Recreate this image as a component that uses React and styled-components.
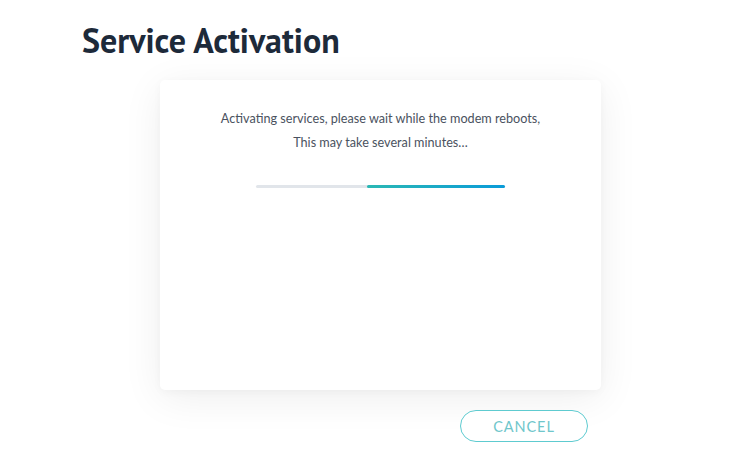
import React from "react";
import styled, { createGlobalStyle } from "styled-components";

const Global = createGlobalStyle`
  html, body { margin: 0; padding: 0; background: #ffffff; }
  body { font-family: "Source Sans Pro", Lato, "Noto Sans", sans-serif; }
`;

const Page = styled.main`
  width: 738px;
  height: 464px;
  box-sizing: border-box;
  padding: 20px 0 0 82px;
  overflow: hidden;
`;

const Title = styled.h1`
  margin: 0;
  font-family: "PT Sans", "Open Sans", sans-serif;
  font-weight: 700;
  font-size: 34px;
  line-height: 40px;
  color: #1d2a3a;
  letter-spacing: 0;
`;

const Card = styled.section`
  margin: 20px 0 0 78px;
  width: 441px;
  height: 310px;
  box-sizing: border-box;
  background: #fff;
  border-radius: 5px;
  box-shadow: 0 8px 40px rgba(0, 0, 0, 0.07), 0 2px 10px rgba(0, 0, 0, 0.03);
  padding: 27px 0 0;
  display: flex;
  flex-direction: column;
  align-items: center;
`;

const Message = styled.p`
  margin: 0;
  font-family: Lato, sans-serif;
  font-size: 12.65px;
  line-height: 24px;
  color: #4a5260;
  text-align: center;
`;

const Track = styled.div`
  margin-top: 30px;
  width: 249px;
  height: 3px;
  border-radius: 2px;
  background: #e1e5ea;
  display: flex;
  justify-content: flex-end;
`;

const Fill = styled.div`
  height: 100%;
  border-radius: 2px;
  background: linear-gradient(90deg, #2bb8b4, #0a9bd9);
`;

const Actions = styled.div`
  width: 506px;
  margin-top: 20px;
  display: flex;
  justify-content: flex-end;
`;

const CancelButton = styled.button`
  width: 128px;
  height: 32px;
  box-sizing: border-box;
  border: 1.5px solid #5ecbd0;
  border-radius: 16px;
  background: #fff;
  color: #6fc6cb;
  font-family: Lato, sans-serif;
  font-size: 14.5px;
  letter-spacing: 0.9px;
  cursor: pointer;
  padding: 0;
`;

export default function App() {
  const progress = 0.555;
  return (
    <Page>
      <Global />
      <Title>Service Activation</Title>
      <Card>
        <Message>
          Activating services, please wait while the modem reboots,
          <br />
          This may take several minutes…
        </Message>
        <Track>
          <Fill style={{ width: `${progress * 100}%` }} />
        </Track>
      </Card>
      <Actions>
        <CancelButton>CANCEL</CancelButton>
      </Actions>
    </Page>
  );
}
